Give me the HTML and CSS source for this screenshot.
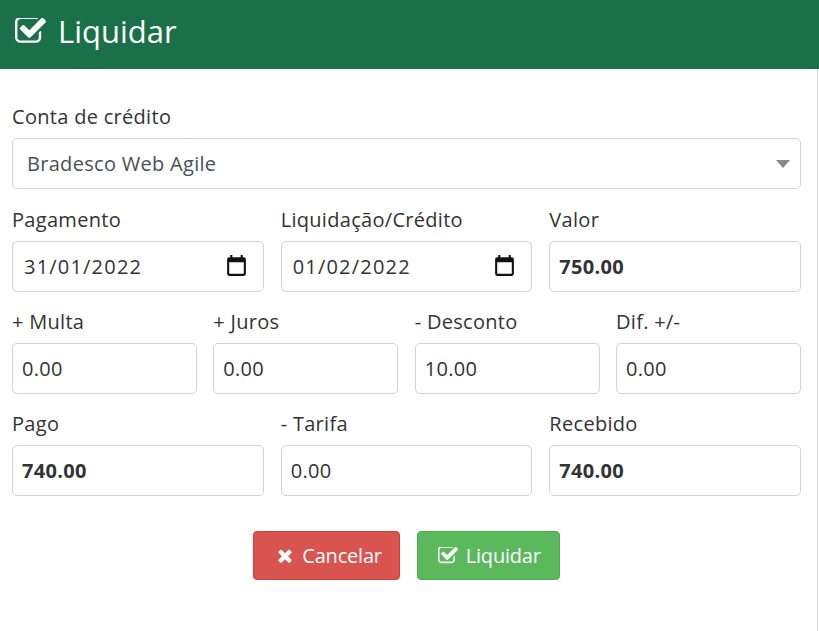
FILE: index.html
```html
<!DOCTYPE html>
<html lang="pt-BR">
<head>
    <meta charset="UTF-8">
    <meta name="viewport" content="width=device-width, initial-scale=1.0">
    <title>Liquidar</title>
    <link rel="stylesheet" href="styles.css">
</head>
<body>
    <div class="modal">
        <div class="modal-header">
            <svg class="icon-check-title" viewBox="0 200 1664 1400"><path d="M1408 930v318q0 119-84.500 203.500t-203.500 84.500h-832q-119 0-203.500-84.500t-84.500-203.500v-832q0-119 84.500-203.500t203.500-84.500h832q63 0 117 25 15 7 18 23 3 17-9 29l-49 49q-10 10-23 10-3 0-9-2-23-6-45-6h-832q-66 0-113 47t-47 113v832q0 66 47 113t113 47h832q66 0 113-47t47-113v-254q0-13 9-22l64-64q10-10 23-10 6 0 12 3 20 8 20 29zm231-489l-814 814q-24 24-57 24t-57-24l-430-430q-24-24-24-57t24-57l110-110q24-24 57-24t57 24l263 263 647-647q24-24 57-24t57 24l110 110q24 24 24 57t-24 57z"/></svg>
            <h1>Liquidar</h1>
        </div>
        <form class="modal-body">
            <div class="field">
                <label>Conta de crédito</label>
                <div class="control select">
                    <span>Bradesco Web Agile</span>
                    <span class="caret"></span>
                </div>
            </div>
            <div class="row row-3 row-first">
                <div class="field">
                    <label>Pagamento</label>
                    <div class="control date">
                        <span class="date-text">31/01/2022</span>
                        <svg class="icon-cal" viewBox="0 0 24 24"><path d="M19 3h-1V1h-2v2H8V1H6v2H5a2 2 0 0 0-2 2v14a2 2 0 0 0 2 2h14a2 2 0 0 0 2-2V5a2 2 0 0 0-2-2zm0 16H5V8h14z"/></svg>
                    </div>
                </div>
                <div class="field">
                    <label>Liquidação/Crédito</label>
                    <div class="control date">
                        <span class="date-text">01/02/2022</span>
                        <svg class="icon-cal" viewBox="0 0 24 24"><path d="M19 3h-1V1h-2v2H8V1H6v2H5a2 2 0 0 0-2 2v14a2 2 0 0 0 2 2h14a2 2 0 0 0 2-2V5a2 2 0 0 0-2-2zm0 16H5V8h14z"/></svg>
                    </div>
                </div>
                <div class="field">
                    <label>Valor</label>
                    <input class="control strong" type="text" value="750.00">
                </div>
            </div>
            <div class="row row-4">
                <div class="field">
                    <label>+ Multa</label>
                    <input class="control" type="text" value="0.00">
                </div>
                <div class="field">
                    <label>+ Juros</label>
                    <input class="control" type="text" value="0.00">
                </div>
                <div class="field">
                    <label>- Desconto</label>
                    <input class="control" type="text" value="10.00">
                </div>
                <div class="field">
                    <label>Dif. +/-</label>
                    <input class="control" type="text" value="0.00">
                </div>
            </div>
            <div class="row row-3">
                <div class="field">
                    <label>Pago</label>
                    <input class="control strong" type="text" value="740.00">
                </div>
                <div class="field">
                    <label>- Tarifa</label>
                    <input class="control" type="text" value="0.00">
                </div>
                <div class="field">
                    <label>Recebido</label>
                    <input class="control strong" type="text" value="740.00">
                </div>
            </div>
            <div class="actions">
                <button class="btn btn-cancel" type="button">
                    <svg class="icon-x" viewBox="0 220 1408 1340"><path d="M1298 1322q0 40-28 68l-136 136q-28 28-68 28t-68-28l-294-294-294 294q-28 28-68 28t-68-28l-136-136q-28-28-28-68t28-68l294-294-294-294q-28-28-28-68t28-68l136-136q28-28 68-28t68 28l294 294 294-294q28-28 68-28t68 28l136 136q28 28 28 68t-28 68l-294 294 294 294q28 28 28 68z"/></svg>
                    Cancelar
                </button>
                <button class="btn btn-ok" type="button">
                    <svg class="icon-check" viewBox="0 200 1664 1400"><path d="M1408 930v318q0 119-84.500 203.500t-203.500 84.500h-832q-119 0-203.500-84.500t-84.500-203.500v-832q0-119 84.500-203.500t203.500-84.500h832q63 0 117 25 15 7 18 23 3 17-9 29l-49 49q-10 10-23 10-3 0-9-2-23-6-45-6h-832q-66 0-113 47t-47 113v832q0 66 47 113t113 47h832q66 0 113-47t47-113v-254q0-13 9-22l64-64q10-10 23-10 6 0 12 3 20 8 20 29zm231-489l-814 814q-24 24-57 24t-57-24l-430-430q-24-24-24-57t24-57l110-110q24-24 57-24t57 24l263 263 647-647q24-24 57-24t57 24l110 110q24 24 24 57t-24 57z"/></svg>
                    Liquidar
                </button>
            </div>
        </form>
    </div>
</body>
</html>
```

FILE: styles.css
```css
* {
    box-sizing: border-box;
}
body {
    margin: 0;
    background: #fff;
    color: #333;
    font-family: 'Open Sans', sans-serif;
    font-size: 20px;
    letter-spacing: 0.3px;
}
.modal {
    min-height: 631px;
}
.modal-header {
    height: 69px;
    background: #1a7048;
    color: #fff;
    display: flex;
    align-items: center;
    gap: 12px;
    padding: 0 15px 7px;
}
.modal-header h1 {
    margin: 0;
    font-size: 31px;
    font-weight: 400;
    line-height: 1;
    letter-spacing: 0;
}
.icon-check-title {
    width: 31px;
    height: 26px;
    fill: #fff;
}
.modal-body {
    min-height: 562px;
    margin-right: 1px;
    border-right: 1px solid #d6d6d6;
    padding: 36px 16px 0 12px;
}
.field {
    display: flex;
    flex-direction: column;
    min-width: 0;
}
.field label {
    line-height: 24px;
    margin-bottom: 9px;
}
.row {
    display: grid;
    gap: 17px;
    margin-top: 18px;
}
.row-first {
    margin-top: 19px;
}
.row-3 {
    grid-template-columns: repeat(3, 1fr);
}
.row-4 {
    grid-template-columns: repeat(4, 1fr);
    gap: 16.33px;
}
.control {
    width: 100%;
    height: 51px;
    border: 1px solid #ced4da;
    border-radius: 5px;
    background: #fff;
    color: #333;
    font-family: 'Open Sans', sans-serif;
    font-size: 20px;
    letter-spacing: 0.3px;
    padding: 0 9px;
    outline: none;
}
.strong {
    font-weight: 700;
}
.select {
    display: flex;
    align-items: center;
    justify-content: space-between;
    padding: 0 10px 0 14px;
    color: #495057;
}
.caret {
    width: 0;
    height: 0;
    border-left: 7px solid transparent;
    border-right: 7px solid transparent;
    border-top: 8px solid #888;
}
.date {
    display: flex;
    align-items: center;
    justify-content: space-between;
    padding: 0 14px 0 11px;
}
.date-text {
    letter-spacing: 1.2px;
}
.icon-cal {
    width: 25px;
    height: 25px;
    fill: #111;
}
.actions {
    display: flex;
    justify-content: center;
    gap: 17px;
    margin-top: 35px;
}
.btn {
    height: 49px;
    display: flex;
    align-items: center;
    gap: 8px;
    border-radius: 4px;
    color: #fff;
    font-family: 'Open Sans', sans-serif;
    font-size: 20px;
    letter-spacing: -0.2px;
    padding: 0 18px 0 20px;
}
.btn-cancel {
    background: #d9534f;
    border: 1px solid #d43f3a;
    gap: 9px;
    padding: 0 17px 0 23px;
}
.btn-ok {
    background: #5cb85c;
    border: 1px solid #4cae4c;
}
.icon-x {
    width: 16px;
    height: 15px;
    fill: #fff;
}
.icon-check {
    width: 20px;
    height: 17px;
    fill: #fff;
}
```
